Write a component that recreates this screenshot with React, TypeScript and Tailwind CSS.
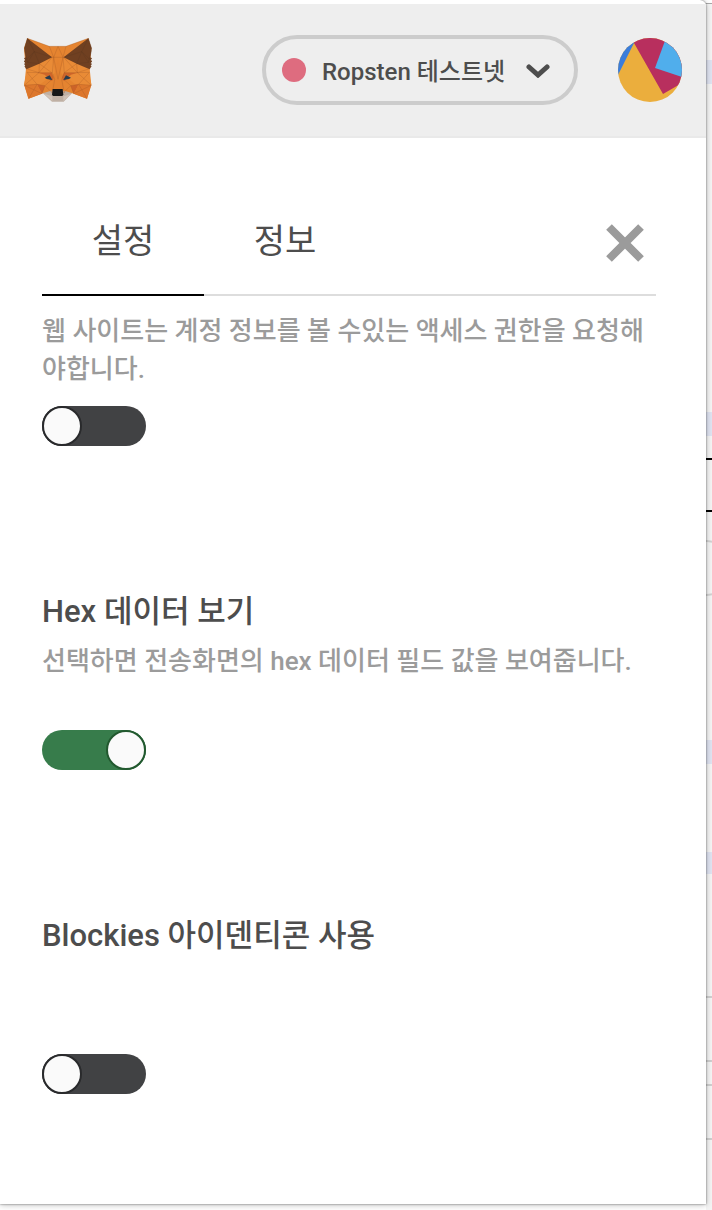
import { useState } from "react";
import clsx from "clsx";

const SETTINGS = [
  {
    id: "privacy",
    title: "",
    description: "웹 사이트는 계정 정보를 볼 수있는 액세스 권한을 요청해야합니다.",
    enabled: false,
  },
  {
    id: "hex-data",
    title: "Hex 데이터 보기",
    description: "선택하면 전송화면의 hex 데이터 필드 값을 보여줍니다.",
    enabled: true,
  },
  {
    id: "blockies",
    title: "Blockies 아이덴티콘 사용",
    description: "",
    enabled: false,
  },
];

function FoxLogo() {
  return (
    <svg viewBox="42 39 204 192" className="h-16 w-[68px]" aria-hidden="true">
      {/* Chin */}
      <path d="M98 204 129 190h29l31 12-28 28h-35z" fill="#bfb0a4" />
      <path d="M102 206l25 8v14zM185 206l-25 8v14z" fill="#d1c2b6" />
      {/* Face */}
      <path
        d="M52 40 118 64h50L235 40l9 30-5 60-3 14 8 34-13 43-46-17-27-8h-30l-27 8-46 17-13-43 8-34-3-14-5-60z"
        fill="#e58430"
      />
      <path d="M48 131 88 114l38-15 10 44-45 35-48 2z" fill="#e98b36" />
      <path d="M239 131 200 114l-39-15-10 44 45 35 48 2z" fill="#e98b36" />
      <path d="M84 143h41l9 21-11 3-19-18z" fill="#cf6629" />
      <path d="M203 143h-41l-9 21 11 3 19-18z" fill="#cf6629" />
      <path d="M81 178 105 182 96 206zM206 178 182 182 191 206z" fill="#cc6328" />
      <path d="M43 181 81 178 96 206 56 221zM244 181 206 178 191 206 231 221z" fill="#dd772c" />
      <path d="M129 165 124 204 129 193h29l5 11-5-39-14-62z" fill="#e38230" />
      {/* Ears */}
      <path
        d="M52 40 126 97 88 116 49 133 43 123h3l-4-7 4-1-5-7 5-2-4-6 5-3-4-27z"
        fill="#704021"
      />
      <path
        d="M235 40 161 97l39 19 39 17 6-10h-3l4-7-4-1 5-7-5-2 4-6-5-3 4-27z"
        fill="#704021"
      />
      {/* Facets */}
      <g fill="none" stroke="#9c5426" strokeWidth="1.5" opacity=".55">
        <path d="M52 40 118 64h50L235 40M118 64l13 33h28l9-33M126 97l5 0 13-33 15 33M131 97l-4 46 7 20-7 41M159 97l4 46-8 20 8 41M126 97 87 143 48 131M161 97l41 46 37-12M88 116l-1 27 40 0M200 116l2 27-40 0M88 116l37 27M200 116l-37 27M51 142l36 1-44 38 38-3 24 4 20-18M238 142l-36 1 42 38-38-3-24 4-20-18M51 142l30 36M238 142l-32 36M43 181l53 25M244 181l-53 25M56 221l25-43M231 221l-25-43M96 206l9-24 22 22M191 206l-9-24-22 22M131 97l13 66 15-66" />
      </g>
      <g fill="none" stroke="#59351f" strokeWidth="1.5" opacity=".6">
        <path d="M52 40 73 80 53 112 42 73zM73 80l53 17M53 112l35 4-15-36-27 26M235 40l-20 40 20 32 11-39zM215 80l-54 17M235 112l-35 4 15-36 27 26" />
      </g>
      {/* Eyes */}
      <path d="M104 158l15-7 8 14-17-3z" fill="#293b4c" />
      <path d="M183 158l-15-7-8 14 17-3z" fill="#293b4c" />
      {/* Nose */}
      <path d="M128 192h30l2 17-3 4h-28l-3-4z" fill="#161616" />
    </svg>
  );
}

function AccountIcon() {
  return (
    <svg viewBox="0 0 64 64" className="size-16 rounded-full" aria-hidden="true">
      <rect width="64" height="64" fill="#ebae3d" />
      <path d="M0 0h19l-3 5L0 37z" fill="#3a7ddb" />
      <path d="M13 0h51v45L45 56 16 5z" fill="#b82f5e" />
      <path d="M48 0h16v39L37 30z" fill="#50aeec" />
    </svg>
  );
}

function Toggle({ label, initial }: { label: string; initial: boolean }) {
  const [on, setOn] = useState(initial);

  return (
    <input
      type="checkbox"
      role="switch"
      aria-label={label}
      checked={on}
      onChange={(e) => setOn(e.target.checked)}
      className={clsx(
        "flex h-10 w-[104px] cursor-pointer appearance-none rounded-full before:size-10 before:rounded-full before:border-2 before:bg-[#fafafa]",
        on
          ? "justify-end bg-[#377c4b] before:border-[#22592f]"
          : "justify-start bg-[#414244] before:border-[#292a2c]"
      )}
    />
  );
}

// Sliver of the page that stays visible beside the popup
function PageEdge() {
  return (
    <div className="flex w-[6px] shrink-0 flex-col bg-[#f4f4f4]" aria-hidden="true">
      <div className="h-1 border-b border-[#a8a8a8] bg-white" />
      <div className="mt-14 h-6 bg-[#dfe3f1]" />
      <div className="mt-[328px] h-6 bg-[#dfe3f1]" />
      <div className="mt-[22px] h-[54px] border-y-2 border-black" />
      <div className="mt-7 flex h-14 overflow-hidden">
        <div className="w-7 shrink-0 rounded-r-full border-y-2 border-r-2 border-[#d2d2d2]" />
      </div>
      <div className="mt-36 h-6 bg-[#dfe3f1]" />
      <div className="mt-[88px] h-[22px] bg-[#dfe3f1]" />
      <div className="mt-[122px] h-[66px] border-y-2 border-[#cfcfcf]" />
      <div className="mt-[22px] h-14 border-y-2 border-[#cfcfcf]" />
    </div>
  );
}

export default function App() {
  const [tab, setTab] = useState("설정");

  return (
    <div className="flex min-h-screen bg-white font-[Roboto,'Noto_Sans_CJK_KR',sans-serif] text-[#4d4d4d]">
      <div className="relative z-10 mb-[6px] min-w-0 flex-1 rounded-tr-md bg-white pt-1 shadow-[0_0_2px_rgba(0,0,0,0.6),0_1px_6px_rgba(0,0,0,0.25)]">
        <header className="flex h-[134px] items-center border-b-2 border-[#e9e9e9] bg-[#eeeeee] px-6">
          <a href="#" aria-label="MetaMask">
            <FoxLogo />
          </a>
          <button
            type="button"
            className="ml-auto flex h-[70px] w-[316px] items-center rounded-full border-4 border-[#cccccc] px-4"
          >
            <span className="size-6 shrink-0 rounded-full bg-[#de6c7f]" />
            <span className="ml-4 pt-1 text-[24px] leading-8 font-medium whitespace-nowrap">
              Ropsten 테스트넷
            </span>
            <svg viewBox="0 0 24 16" className="mr-2 ml-auto h-4 w-6" aria-hidden="true">
              <path
                d="M3 5l9 8 9-8"
                fill="none"
                stroke="#4d4d4d"
                strokeWidth="5"
                strokeLinecap="round"
              />
            </svg>
          </button>
          <button type="button" aria-label="계정" className="ml-10 rounded-full">
            <AccountIcon />
          </button>
        </header>

        <main className="px-[42px] pt-[50px] pb-[106px]">
          <div className="mr-2 flex h-[108px] border-b-2 border-[#dddddd]">
            {["설정", "정보"].map((name) => (
              <button
                key={name}
                type="button"
                onClick={() => setTab(name)}
                className={clsx(
                  "-mb-[2px] w-[162px] border-b-2 text-[34px] leading-10",
                  tab === name ? "border-black" : "border-transparent"
                )}
              >
                {name}
              </button>
            ))}
            <button type="button" aria-label="닫기" className="mr-3 ml-auto pt-1">
              <svg viewBox="0 0 38 38" className="size-[38px]" aria-hidden="true">
                <path d="M3 3l32 32M35 3L3 35" stroke="#9b9b9b" strokeWidth="8" />
              </svg>
            </button>
          </div>

          <div className="mr-2 flex flex-col gap-36 pt-4">
            {SETTINGS.map((item) => (
              <section key={item.id}>
                {item.title && (
                  <h2 className="mb-2 text-[31px] leading-[44px] font-medium">{item.title}</h2>
                )}
                <p
                  className={clsx(
                    "text-[26px] leading-[38px] font-medium text-[#9b9b9b]",
                    item.title ? "mb-5 min-h-[68px]" : "mb-[18px]"
                  )}
                >
                  {item.description}
                </p>
                <Toggle label={item.title || item.description} initial={item.enabled} />
              </section>
            ))}
          </div>
        </main>
      </div>
      <PageEdge />
    </div>
  );
}
